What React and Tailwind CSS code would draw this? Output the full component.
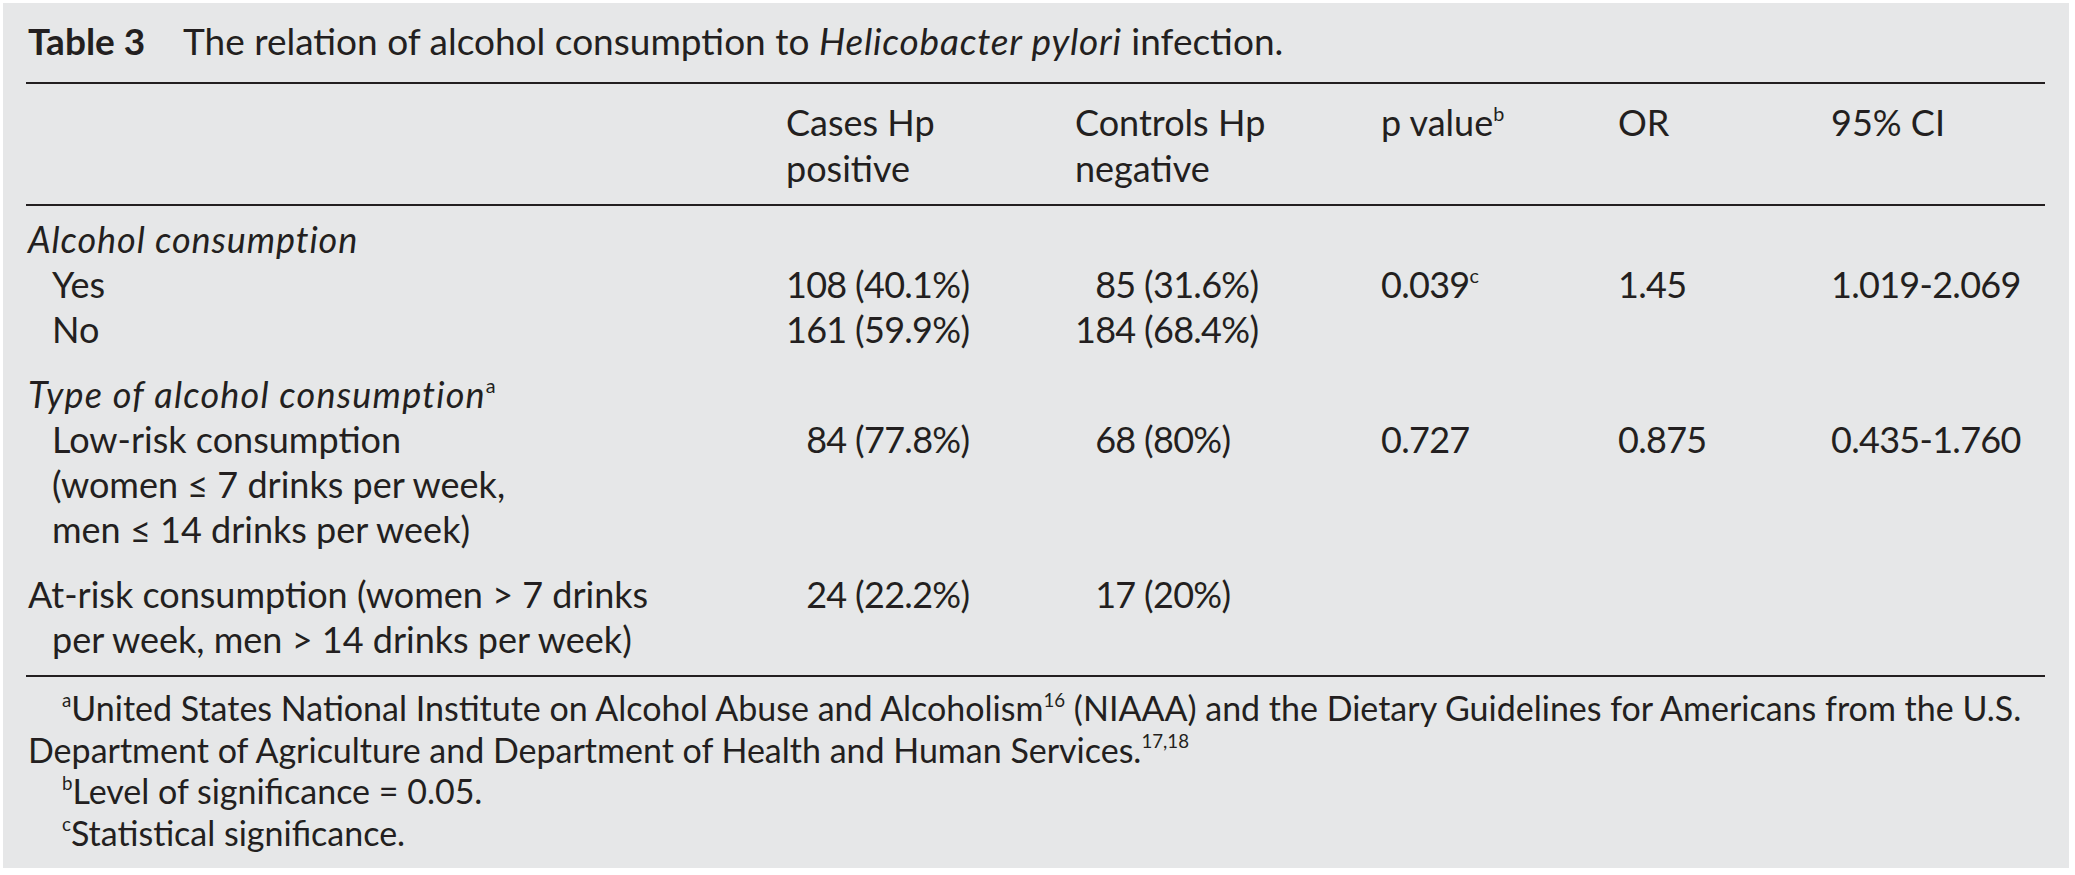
import React from "react";

const cols = "grid grid-cols-[758px_289px_306px_237px_213px_1fr] pl-[2px]";
const num = "tracking-[-0.7px]";

function Pad() {
  // keeps two-digit counts lined up with three-digit ones
  return <span className="invisible">0</span>;
}

function Sup({ children }) {
  return <sup className="text-[0.55em] top-[-0.75em]">{children}</sup>;
}

function Rule() {
  return <div className="h-[2px] bg-[#231f20]" />;
}

export default function App() {
  return (
    <div className="min-h-screen bg-white pt-[3px] pl-[3px]">
      <div className="w-[2066px] h-[865px] bg-[#e6e7e8] pl-[23px] pr-[24px] pt-[15px] text-[#231f20] font-['Lato',sans-serif] tabular-nums">
        {/* Caption */}
        <div className="pl-[2px] text-[37px] leading-[45px] whitespace-nowrap">
          <span className="inline-block w-[155px] font-bold">Table 3</span>
          <span>
            The relation of alcohol consumption to{" "}
            <i className="tracking-[0.8px]">Helicobacter pylori</i> infection.
          </span>
        </div>

        <div className="mt-[19px]">
          <Rule />
        </div>

        {/* Header */}
        <div className={`${cols} pt-[15px] pb-[13px] text-[36px] leading-[46px]`}>
          <div />
          <div>
            Cases Hp
            <br />
            positive
          </div>
          <div>
            Controls Hp
            <br />
            negative
          </div>
          <div>
            p value<Sup>b</Sup>
          </div>
          <div>OR</div>
          <div>95% CI</div>
        </div>

        <Rule />

        {/* Body */}
        <div className="pt-[11px] pb-[13px] text-[36px] leading-[45px]">
          <div className={cols}>
            <div className="col-span-6 italic tracking-[0.9px]">Alcohol consumption</div>
          </div>
          <div className={cols}>
            <div className="pl-[24px]">Yes</div>
            <div className={num}>108 (40.1%)</div>
            <div className={num}>
              <Pad />
              85 (31.6%)
            </div>
            <div className={num}>
              0.039<Sup>c</Sup>
            </div>
            <div className={num}>1.45</div>
            <div className={num}>1.019-2.069</div>
          </div>
          <div className={cols}>
            <div className="pl-[24px]">No</div>
            <div className={num}>161 (59.9%)</div>
            <div className={num}>184 (68.4%)</div>
            <div />
            <div />
            <div />
          </div>

          <div className={`${cols} mt-[20px]`}>
            <div className="col-span-6">
              <i className="tracking-[1.2px]">Type of alcohol consumption</i>
              <Sup>a</Sup>
            </div>
          </div>
          <div className={cols}>
            <div className="pl-[24px]">
              Low-risk consumption
              <br />
              (women ≤ 7 drinks per week,
              <br />
              men ≤ 14 drinks per week)
            </div>
            <div className={num}>
              <Pad />
              84 (77.8%)
            </div>
            <div className={num}>
              <Pad />
              68 (80%)
            </div>
            <div className={num}>0.727</div>
            <div className={num}>0.875</div>
            <div className={num}>0.435-1.760</div>
          </div>

          <div className={`${cols} mt-[20px]`}>
            <div className="pl-[24px] -indent-[24px]">
              At-risk consumption (women &gt; 7 drinks
              <br />
              per week, men &gt; 14 drinks per week)
            </div>
            <div className={num}>
              <Pad />
              24 (22.2%)
            </div>
            <div className={num}>
              <Pad />
              17 (20%)
            </div>
            <div />
            <div />
            <div />
          </div>
        </div>

        <Rule />

        {/* Footnotes */}
        <div className="pl-[2px] pt-[10px] text-[34px] leading-[41.5px] whitespace-nowrap">
          <p className="indent-[34px]">
            <Sup>a</Sup>United States National Institute on Alcohol Abuse and
            Alcoholism<Sup>16</Sup> (NIAAA) and the Dietary Guidelines for
            Americans from the U.S.
            <br />
            Department of Agriculture and Department of Health and Human
            Services.<Sup>17,18</Sup>
          </p>
          <p className="indent-[34px]">
            <Sup>b</Sup>Level of significance = 0.05.
          </p>
          <p className="indent-[34px]">
            <Sup>c</Sup>Statistical significance.
          </p>
        </div>
      </div>
    </div>
  );
}
